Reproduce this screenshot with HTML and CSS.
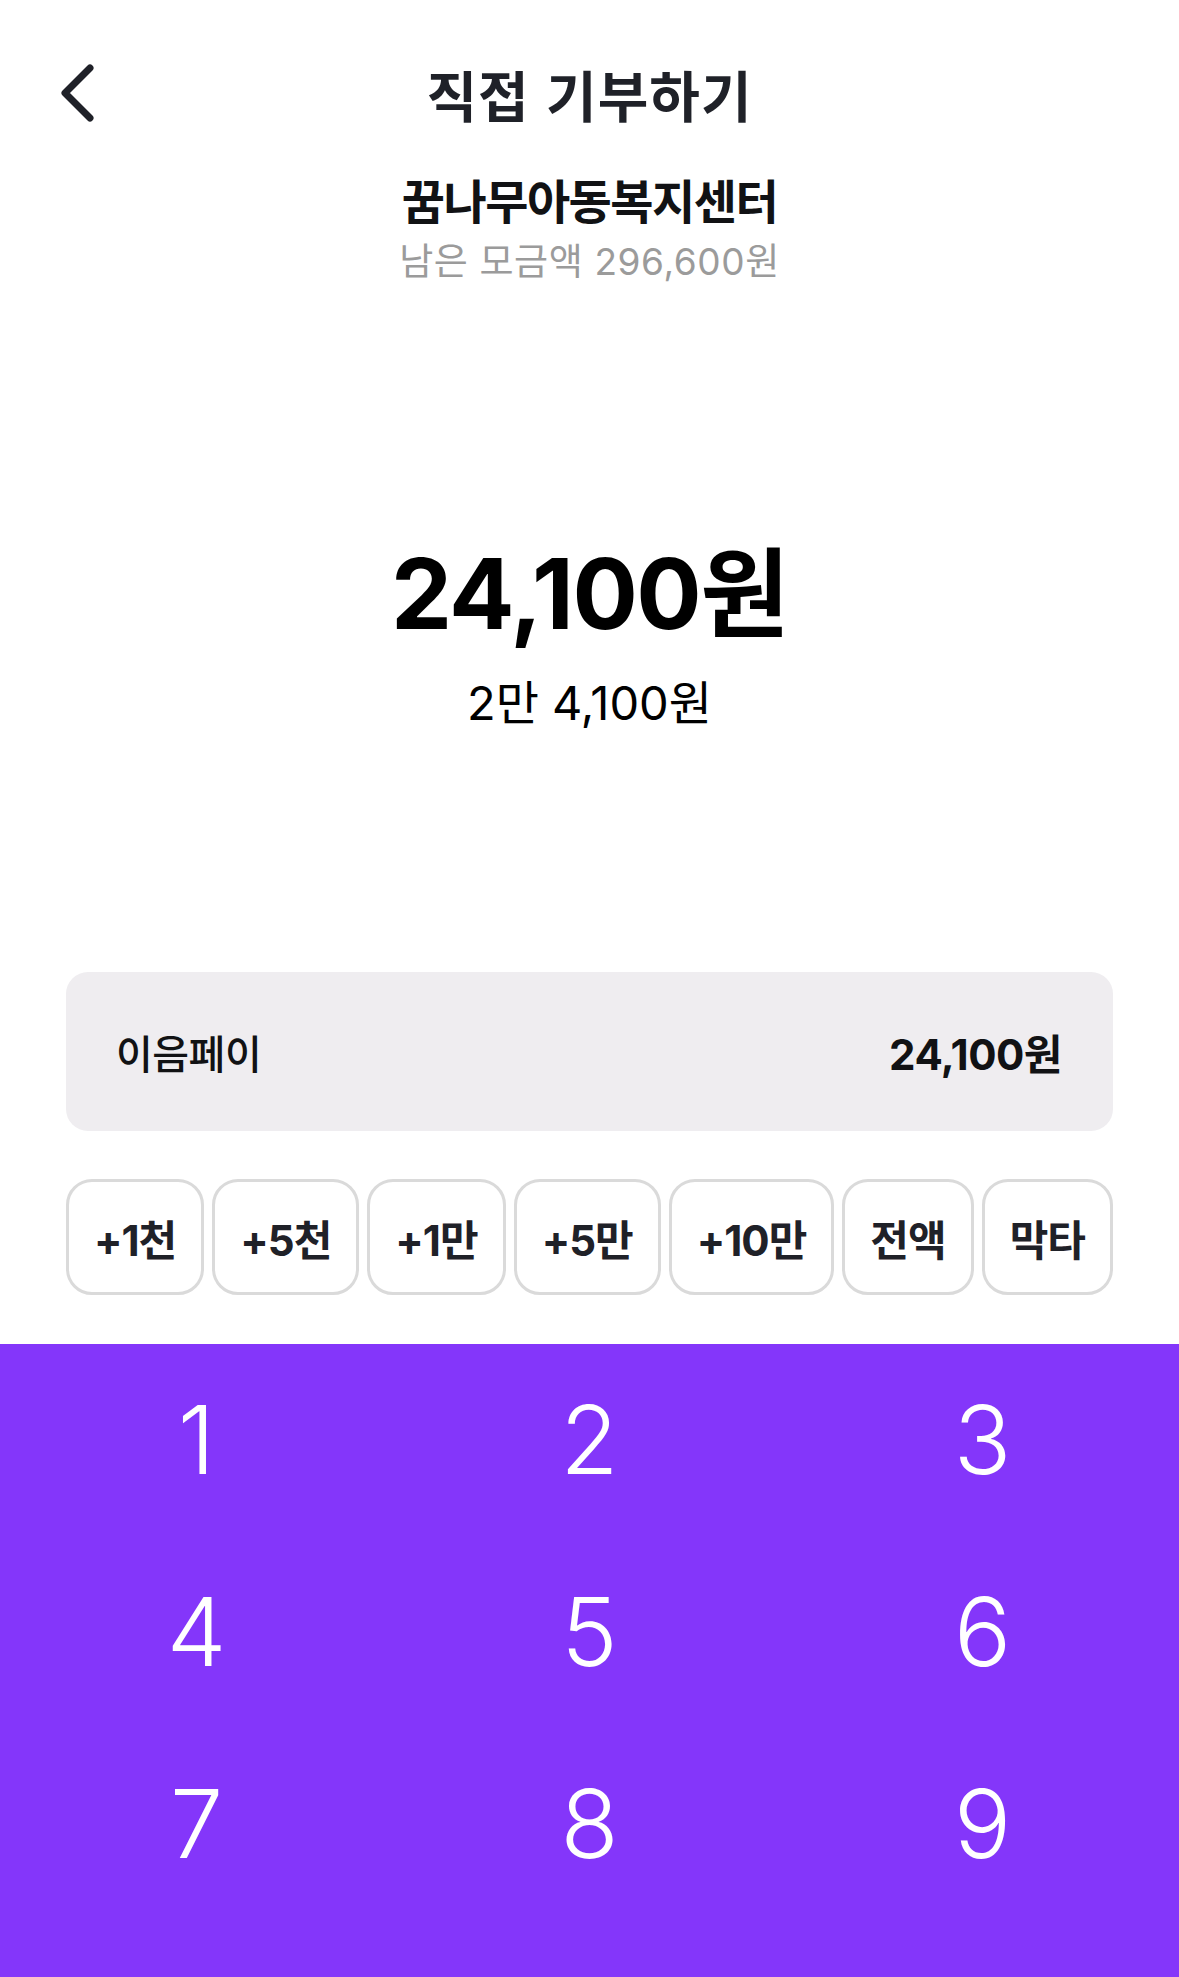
FILE: index.html
```html
<!DOCTYPE html>
<html lang="ko">
<head>
<meta charset="utf-8">
<title>직접 기부하기</title>
<link rel="stylesheet" href="styles.css">
</head>
<body>
<div class="screen">
  <header class="topbar">
    <button class="back" aria-label="뒤로">
      <svg width="40" height="60" viewBox="0 0 40 60"><polyline points="32,5 7,30 32,55" fill="none" stroke="#1f2128" stroke-width="7" stroke-linecap="round" stroke-linejoin="round"/></svg>
    </button>
    <h1 class="title">직접 기부하기</h1>
    <span></span>
  </header>

  <section class="target">
    <div class="org">꿈나무아동복지센터</div>
    <div class="remain">남은 모금액 296,600원</div>
  </section>

  <section class="amount">
    <div class="amount-main">24,100원</div>
    <div class="amount-sub">2만 4,100원</div>
  </section>

  <div class="pay-card">
    <span class="pay-name">이음페이</span>
    <span class="pay-value">24,100원</span>
  </div>

  <div class="chips">
    <button class="chip">+1천</button>
    <button class="chip">+5천</button>
    <button class="chip">+1만</button>
    <button class="chip">+5만</button>
    <button class="chip">+10만</button>
    <button class="chip">전액</button>
    <button class="chip">막타</button>
  </div>

  <div class="keypad">
    <button class="key">1</button>
    <button class="key">2</button>
    <button class="key">3</button>
    <button class="key">4</button>
    <button class="key">5</button>
    <button class="key">6</button>
    <button class="key">7</button>
    <button class="key">8</button>
    <button class="key">9</button>
    <div class="key-blank"></div>
    <div class="key-blank"></div>
    <button class="key key-icon" aria-label="지우기">
      <svg width="100" height="90" viewBox="0 0 100 90"><path d="M32 12 H88 a6 6 0 0 1 6 6 V72 a6 6 0 0 1 -6 6 H32 L6 45 Z" fill="none" stroke="#fff" stroke-width="6" stroke-linejoin="round"/><path d="M48 30 L72 60 M72 30 L48 60" stroke="#fff" stroke-width="6" stroke-linecap="round"/></svg>
    </button>
  </div>
</div>
</body>
</html>
```
FILE: styles.css
```css
html, body {
  margin: 0;
  padding: 0;
  background: #ffffff;
}
body {
  width: 1179px;
  height: 1977px;
  overflow: hidden;
  font-family: Inter, "Noto Sans CJK KR", "Noto Sans", sans-serif;
  color: #1f2128;
}
button {
  font: inherit;
  color: inherit;
  background: none;
  border: 0;
  padding: 0;
  margin: 0;
}
.screen {
  display: flex;
  flex-direction: column;
  height: 1977px;
}
.screen > * {
  flex-shrink: 0;
}
.topbar {
  display: grid;
  grid-template-columns: 1fr auto 1fr;
  align-items: center;
  height: 66px;
  padding: 60px 0 0 58px;
}
.back {
  width: 40px;
  height: 60px;
  display: flex;
}
.title {
  margin: 0;
  font-family: "Noto Sans CJK KR", sans-serif;
  font-size: 55px;
  font-weight: 700;
  letter-spacing: 1px;
  line-height: 66px;
  color: #1f2128;
  position: relative;
  left: -29px;
}
.target {
  margin-top: 48px;
  text-align: center;
  font-family: "Noto Sans CJK KR", sans-serif;
}
.org {
  font-size: 47px;
  font-weight: 700;
  letter-spacing: -1.5px;
  line-height: 50px;
  color: #111214;
}
.remain {
  margin-top: 16px;
  font-family: Inter, "Noto Sans CJK KR", sans-serif;
  font-size: 37px;
  line-height: 44px;
  letter-spacing: 0.6px;
  color: #9b9b9b;
}
.amount {
  margin-top: 255px;
  text-align: center;
  color: #000;
}
.amount-main {
  font-size: 97px;
  font-weight: 700;
  line-height: 110px;
  letter-spacing: -1.5px;
}
.amount-sub {
  margin-top: 26px;
  font-size: 47px;
  line-height: 56px;
  letter-spacing: 0;
}
.pay-card {
  margin: 241px 66px 0;
  height: 159px;
  border-radius: 22px;
  background: #efedf0;
  display: flex;
  align-items: center;
  justify-content: space-between;
  padding: 0 51px 0 50px;
}
.pay-name {
  font-family: "Noto Sans CJK KR", sans-serif;
  font-size: 40px;
  font-weight: 500;
  letter-spacing: -0.5px;
  color: #111214;
}
.pay-value {
  font-size: 42px;
  font-weight: 700;
  letter-spacing: -0.5px;
  color: #111214;
}
.chips {
  margin-top: 48px;
  padding: 0 66px;
  display: flex;
  justify-content: space-between;
}
.chip {
  height: 116px;
  box-sizing: border-box;
  border: 3px solid #dadada;
  border-radius: 26px;
  padding: 0 25px;
  font-size: 42px;
  font-weight: 700;
  letter-spacing: -1px;
  color: #1f2128;
  background: #fff;
}
.keypad {
  margin-top: 49px;
  flex: 1 1 0;
  min-height: 0;
  overflow: hidden;
  background: #8436fa;
  display: grid;
  grid-template-columns: repeat(3, 1fr);
  grid-auto-rows: 192px;
  align-content: start;
}
.key {
  color: #ffffff;
  font-size: 95px;
  font-weight: 300;
  line-height: 192px;
}
.key-icon {
  display: flex;
  align-items: center;
  justify-content: center;
}
```
